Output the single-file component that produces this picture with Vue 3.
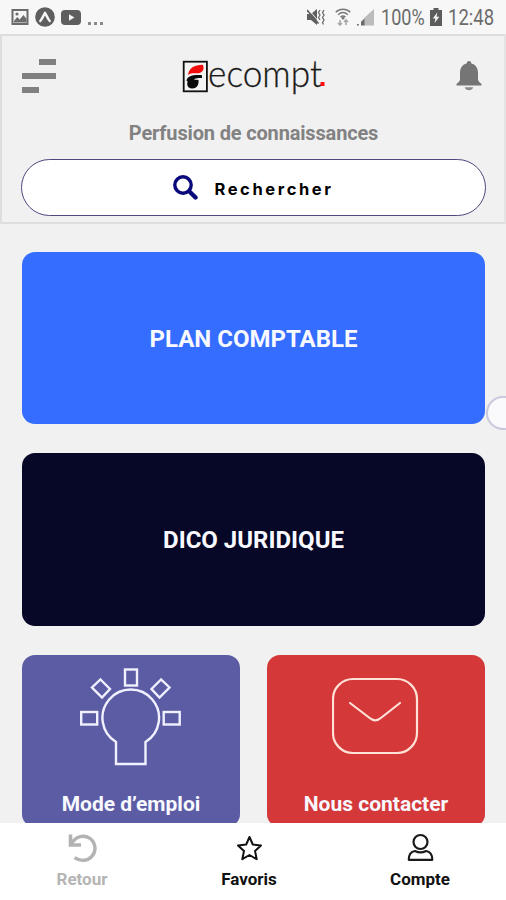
<template>
  <div class="all">
    <div class="status">
      <div class="status-left">
        <svg width="18" height="16" viewBox="0 0 18 16">
          <path fill="#6b6b6b" fill-rule="evenodd" d="M0.5 0h17v16H.5zM2.5 2v12h13V2z" />
          <path fill="#6b6b6b" d="M3 12l3.2-4 2.5 2.5L12.5 6l3 4v3.5H3z" />
          <circle cx="6" cy="5" r="1.6" fill="#6b6b6b" />
        </svg>
        <svg width="20" height="20" viewBox="0 0 20 20">
          <circle cx="10" cy="10" r="9.8" fill="#5e5e5e" />
          <path fill="none" stroke="#f5f5f5" stroke-width="2.4" stroke-linecap="round" stroke-linejoin="round" d="M5.3 14c2-2.400 3.200-5.500 4.700-8.300 1.500 2.800 2.700 5.900 4.700 8.300" />
        </svg>
        <svg width="20" height="15" viewBox="0 0 20 15">
          <rect width="20" height="15" rx="4" fill="#5e5e5e" />
          <path fill="#f5f5f5" d="M8 4.200l5.500 3.300L8 10.800z" />
        </svg>
        <span class="dots"><i></i><i></i><i></i></span>
      </div>
      <div class="status-right">
        <svg class="mute" width="19" height="18" viewBox="0 0 19 18">
          <path fill="#606060" d="M0 6h4l6-5v16l-6-5H0z" />
          <path fill="none" stroke="#f6f6f6" stroke-width="1" d="M2 2l10 12" />
          <path fill="none" stroke="#606060" stroke-width="1.600" d="M0 2l11.500 13.500" />
          <path fill="none" stroke="#6c6c6c" stroke-width="1.300" d="M13 2l-1.500 2.500 1.500 2.500-1.500 2.500 1.500 2.500M17 2l-1.500 2.500 1.500 2.500-1.500 2.500 1.500 2.500-1.500 2.500 1 2" />
        </svg>
        <svg class="wifi" width="16" height="18" viewBox="0 0 16 18">
          <path fill="none" stroke="#7a7a7a" stroke-width="1.500" d="M.8 4.200C4.500.2 11.500.2 15.200 4.200M3.200 6.700c2.800-2.800 6.800-2.800 9.600 0M5.500 9c1.500-1.300 3.500-1.300 5 0" />
          <circle cx="8" cy="10" r="1.600" fill="#7a7a7a" />
          <path fill="none" stroke="#a8a8a8" stroke-width="1.600" d="M5 12v5M3 15l2 2 2-2M11 17v-5M9 14l2-2 2 2" />
        </svg>
        <svg class="signal" width="17" height="17" viewBox="0 0 17 17">
          <path fill="#bcbcbc" d="M17 0v16.500H7V9z" />
          <path fill="#6b6b6b" d="M0 15h1.800v1.500H0zM7.500 9.500v7H4v-3.800z" />
        </svg>
        <span class="status-text battery-text">100%</span>
        <svg class="battery" width="12" height="18" viewBox="0 0 12 18">
          <path fill="#5c5c5c" d="M3.500 0h5v2H12v16H0V2h3.500z" />
          <path fill="#f6f6f6" d="M7.300 4.500L2.800 10.500h2.600L4.600 15l4.700-6.200H6.600z" />
        </svg>
        <span class="status-text time">12:48</span>
      </div>
    </div>

    <div class="header">
      <div class="header-top">
        <svg class="menu" width="34" height="36" viewBox="0 0 34 36">
          <path fill="#808080" d="M17 1h17v6H17zM0 15h34v6H0zM0 29h17v6H0z" />
        </svg>
        <svg class="logo" width="148" height="64" viewBox="0 -12 148 64">
          <rect x="1.700" y="5.700" width="23.200" height="29.600" fill="#f4f4f4" stroke="#111" stroke-width="1.800" />
          <path fill="#f20d0d" d="M6 19C7 12 12 9 20.800 8.800c2 3.700.3 7.500-4 8.500C12.500 17.500 9.500 16.500 6 19z" />
          <path fill="#0a0a0a" d="M4.500 25c.5-4.500 5-6.300 15.500-5.800V22c-4 0-7 0-8 2 1.500-.5 2.500-.5 4.500 0 .5 4.500-1.500 8.500-6 8.500-3.500 0-5.300-2-5.300-4.500 0-1.500.4-2.200.8-2.500z" />
          <text class="logo-name" x="26" y="30.500" textLength="114" lengthAdjust="spacingAndGlyphs">ecompt</text>
          <rect x="138.500" y="26" width="4" height="4" fill="#ff1010" />
        </svg>
        <svg class="bell" width="26" height="30" viewBox="0 0 26 30">
          <path fill="#757575" d="M13 0c1.500 0 2.300 1 2.300 2.500C20 3.600 22 7.500 22 12v6c0 2 1.500 3.500 3.500 5v1.500H.5V23C2.500 21.500 4 20 4 18v-6c0-4.500 2-8.400 6.700-9.500C10.700 1 11.500 0 13 0z" />
          <path fill="#8a8a8a" d="M8.800 26.300h8.400c-.5 1.800-2 2.900-4.200 2.900s-3.700-1.100-4.200-2.900z" />
        </svg>
      </div>
      <p class="slogan">Perfusion de connaissances</p>
      <button class="search">
        <svg width="25" height="25" viewBox="0 0 25 25">
          <circle cx="10" cy="10" r="8.200" fill="none" stroke="#09097c" stroke-width="3.400" />
          <path stroke="#09097c" stroke-width="4.400" stroke-linecap="round" d="M17.200 17.200l5.300 5.300" />
        </svg>
        <span>Rechercher</span>
      </button>
    </div>

    <div class="content">
      <div class="card plan"><span>PLAN COMPTABLE</span></div>
      <div class="card dico"><span>DICO JURIDIQUE</span></div>
      <div class="row">
        <div class="tile mode">
          <svg width="104" height="100" viewBox="0 0 104 100">
            <g fill="none" stroke="#f0f0ff" stroke-width="2.400">
              <path d="M37 75A28.300 28.300 0 1 1 66.500 75V97H37z" />
              <rect x="46" y="2.500" width="12" height="16" />
              <rect x="2.200" y="45" width="16" height="12.500" />
              <rect x="84.700" y="45" width="16" height="12.500" />
              <path d="M21.500 12.500l9.500 9.500-8 8.500-10-10zM82 12.500l-9.500 9.500 8 8.500 10-10z" />
            </g>
          </svg>
          <span>Mode d’emploi</span>
        </div>
        <div class="tile contact">
          <svg width="88" height="78" viewBox="0 0 88 78">
            <g fill="none" stroke="#ffe1d8" stroke-width="2.200">
              <rect x="1" y="2" width="84" height="74" rx="20" />
              <path stroke-linecap="round" d="M18 26l19 14.500c4 3.600 8.500 3.600 12.500 0l18.500-14.500" />
            </g>
          </svg>
          <span>Nous contacter</span>
        </div>
      </div>
    </div>

    <div class="handle"></div>

    <div class="navi">
      <div class="navi-item off">
        <svg width="30" height="30" viewBox="0 0 30 30">
          <path fill="none" stroke="#b3b3b3" stroke-width="3.600" d="M3.500 1.500v10.500h10.500" />
          <path fill="none" stroke="#b3b3b3" stroke-width="3.400" d="M4.500 10.500C9 3 17 1.500 22.500 5.200c6.500 4.500 7.300 13.300 2 18.500-4.500 4.600-11.500 4.700-17 1" />
        </svg>
        <span>Retour</span>
      </div>
      <div class="navi-item">
        <svg width="30" height="30" viewBox="0 0 30 30">
          <path fill="none" stroke="#111" stroke-width="2" stroke-linejoin="round" d="M15.500 4l3.300 7.500 8.200.9-6 5.500 1.700 8.300-7.200-4.200-7.200 4.200L10 17.900l-6-5.500 8.200-.9z" />
        </svg>
        <span>Favoris</span>
      </div>
      <div class="navi-item">
        <svg width="30" height="30" viewBox="0 0 30 30">
          <g fill="none" stroke="#1a1a1a" stroke-width="2.200">
            <circle cx="15.500" cy="9" r="7" />
            <path stroke-linejoin="round" d="M10 18c3.500 1.800 7.500 1.800 11 0 4.200.6 6.300 3.800 6.300 8.800H3.800c0-5 2-8.200 6.200-8.800z" />
          </g>
        </svg>
        <span>Compte</span>
      </div>
    </div>
  </div>
</template>

<script setup>
</script>

<style>
body {
  margin: 0;
  overflow: hidden;
}
</style>

<style scoped>
.all {
  position: relative;
  display: flex;
  flex-direction: column;
  width: 506px;
  height: 900px;
  overflow: hidden;
  background-color: #f1f1f1;
  font-family: Roboto, "Liberation Sans", sans-serif;
}
.all svg {
  display: block;
  flex: none;
}

.status {
  box-sizing: border-box;
  display: flex;
  justify-content: space-between;
  align-items: center;
  height: 34px;
  padding: 0 12px 0 11px;
  background-color: #f7f7f7;
}
.status-left,
.status-right {
  display: flex;
  align-items: center;
}
.status-left {
  gap: 6px;
}
.dots {
  display: flex;
  gap: 3px;
  padding: 13px 0 0 1px;
}
.dots i {
  width: 3px;
  height: 3px;
  background-color: #8a8a8a;
}
.wifi {
  margin-left: 9px;
}
.signal {
  margin-left: 6px;
}
.status-text {
  color: #6c6c6c;
  font-size: 22px;
  line-height: 34px;
  white-space: nowrap;
}
.battery-text {
  width: 44px;
  margin: 1px 1px 0 7px;
  transform: scaleX(0.82);
  transform-origin: left;
}
.battery {
  margin-left: 4px;
}
.time {
  width: 46px;
  margin: 1px 0 0 6px;
  transform: scaleX(0.84);
  transform-origin: left;
}

.header {
  box-sizing: border-box;
  height: 190px;
  padding: 0 18px 0 19px;
  border: 2px solid #dedede;
  border-right-color: #e4e4e4;
}
.header-top {
  display: flex;
  justify-content: space-between;
  align-items: center;
  height: 80px;
}
.menu {
  margin-left: 1px;
}
.logo {
  margin: 0 -4px 0 -5px;
}
.bell {
  margin-right: 4px;
}
.logo-name {
  fill: #1a1a1a;
  stroke: #1a1a1a;
  stroke-width: 0.3px;
  font-family: Lato, sans-serif;
  font-size: 37px;
  font-weight: 300;
}
.slogan {
  margin: 5px 0 13px;
  color: #828282;
  font-size: 20px;
  font-weight: 700;
  letter-spacing: -0.160px;
  line-height: 25px;
  text-align: center;
}
.search {
  box-sizing: border-box;
  display: flex;
  justify-content: center;
  align-items: center;
  gap: 16px;
  width: 465px;
  height: 57px;
  padding: 0;
  border: 1.5px solid #51477f;
  border-radius: 29px;
  background-color: #fff;
  color: #000;
}
.search span {
  padding-top: 2px;
  font-family: Inter, sans-serif;
  font-size: 16.500px;
  font-weight: 700;
  letter-spacing: 2.600px;
}

.content {
  display: flex;
  flex-direction: column;
  gap: 29px;
  height: 599px;
  padding: 27.500px 21px 0 22px;
  box-sizing: border-box;
  overflow: hidden;
}
.card {
  display: flex;
  flex: none;
  justify-content: center;
  align-items: center;
  height: 172.500px;
  border-radius: 13px;
  color: #f8f9ff;
  font-size: 24px;
  font-weight: 700;
}
.card span {
  padding-top: 2px;
}
.plan {
  background-color: #346dff;
}
.dico {
  background-color: #070727;
}
.row {
  display: flex;
  justify-content: space-between;
}
.tile {
  box-sizing: border-box;
  display: flex;
  flex-direction: column;
  justify-content: space-between;
  align-items: center;
  width: 218px;
  height: 172px;
  padding: 12px 0 9px;
  border-radius: 13px;
  color: #f8f9ff;
  font-size: 21px;
  font-weight: 700;
  line-height: 27px;
}
.mode {
  background-color: #5c5ca5;
}
.contact {
  padding-top: 22px;
  background-color: #d43838;
}

.handle {
  position: absolute;
  top: 396px;
  right: -16px;
  box-sizing: border-box;
  width: 36px;
  height: 34px;
  border: 2px solid #c9c9dd;
  border-radius: 17px;
  background-color: #fafafc;
}

.navi {
  display: grid;
  grid-template-columns: 164px 170px 172px;
  flex: 1;
  background-color: #fff;
}
.navi-item {
  display: flex;
  flex-direction: column;
  align-items: center;
  gap: 6px;
  padding-top: 10px;
  color: #111;
  font-size: 17px;
  font-weight: 700;
  line-height: 20px;
}
.off {
  color: #b5b5b5;
}
</style>
